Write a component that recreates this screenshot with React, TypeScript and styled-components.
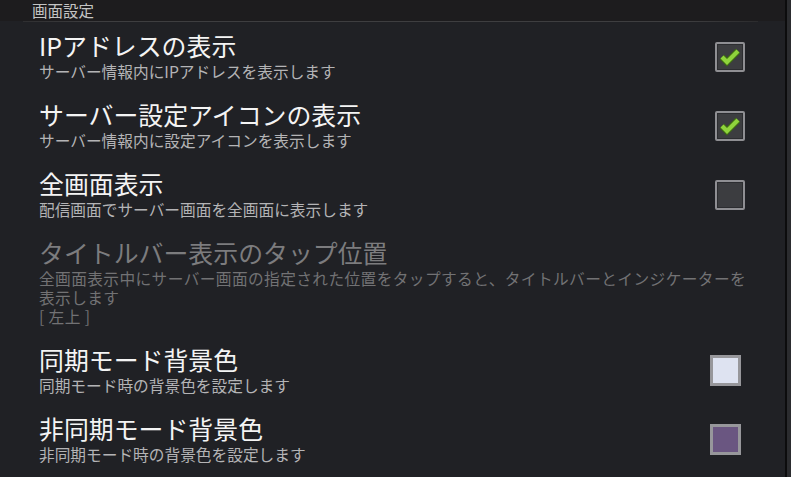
import React from "react";
import styled, { createGlobalStyle } from "styled-components";

const GlobalStyle = createGlobalStyle`
    html, body {
        margin: 0;
        padding: 0;
        background: #202125;
    }
    body {
        font-family: "Noto Sans CJK JP", "Noto Sans", sans-serif;
    }
`;

const Screen = styled.div`
    display: flex;
    width: 791px;
    height: 477px;
    overflow: hidden;
    background: #202125;
`;

const Main = styled.div`
    flex: 1;
    display: flex;
    flex-direction: column;
`;

const ScrollEdge = styled.div`
    width: 4px;
    border-left: 2px solid #0c0c0d;
    background: #2b2c2f;
`;

const Header = styled.div`
    height: 21px;
    background: #1d1c1e;
    padding-left: 32px;
    font-size: 15.5px;
    line-height: 21px;
    color: #c4c4c4;
`;

const HeaderLine = styled.div`
    height: 1px;
    margin: 0 27px 0 23px;
    background: linear-gradient(to right, #2f2f31, #3e3e40 10%, #3e3e40 90%, #2c2c2e);
`;

const Row = styled.div<{ $h: number }>`
    display: flex;
    align-items: center;
    min-height: ${p => p.$h}px;
    padding-left: 39px;
`;

const TextBlock = styled.div`
    flex: 1;
    display: flex;
    flex-direction: column;
    padding: 0 34px 2px 0;
`;

const Title = styled.div<{ $off?: boolean }>`
    font-size: 24.9px;
    line-height: 30px;
    margin-bottom: 2px;
    color: ${p => (p.$off ? "#7c7c7e" : "#f4f4f4")};
    white-space: nowrap;
`;

const Summary = styled.div<{ $off?: boolean }>`
    font-size: 15.7px;
    line-height: 19px;
    letter-spacing: ${p => (p.$off ? "0.4px" : "0")};
    color: ${p => (p.$off ? "#727274" : "#b4b4b6")};
`;

const Widget = styled.div`
    width: 60px;
    margin-right: 25px;
    display: flex;
    justify-content: center;
`;

const Box = styled.div`
    width: 26px;
    height: 26px;
    border: 2px solid #8f8f93;
    border-radius: 2px;
    background: #3c3d40;
    box-shadow: inset 0 0 0 1px #2c2d30;
    display: flex;
    align-items: center;
    justify-content: center;
`;

const Swatch = styled.div<{ $color: string }>`
    width: 25px;
    height: 25px;
    margin-right: 9px;
    border: 3px solid #97979b;
    background: ${p => p.$color};
`;

const Check = () => (
    <svg width="24" height="20" viewBox="0 0 24 20">
        <path d="M4 10 L9 15 L20 4" fill="none" stroke="#3e6b12" strokeWidth="6.5" />
        <path d="M4 10 L9 15 L20 4" fill="none" stroke="#8fd43c" strokeWidth="4.2" />
    </svg>
);

type Pref = {
    title: string;
    summary: string;
    extra?: string;
    off?: boolean;
    h: number;
    widget?: React.ReactNode;
};

const PREFS: Pref[] = [
    { title: "IPアドレスの表示", summary: "サーバー情報内にIPアドレスを表示します", h: 69, widget: <Box><Check /></Box> },
    { title: "サーバー設定アイコンの表示", summary: "サーバー情報内に設定アイコンを表示します", h: 69, widget: <Box><Check /></Box> },
    { title: "全画面表示", summary: "配信画面でサーバー画面を全画面に表示します", h: 69, widget: <Box /> },
    {
        title: "タイトルバー表示のタップ位置",
        summary: "全画面表示中にサーバー画面の指定された位置をタップすると、タイトルバーとインジケーターを表示します",
        extra: "[ 左上 ]",
        off: true,
        h: 107,
    },
    { title: "同期モード背景色", summary: "同期モード時の背景色を設定します", h: 69, widget: <Swatch $color="#dee3f1" /> },
    { title: "非同期モード背景色", summary: "非同期モード時の背景色を設定します", h: 68, widget: <Swatch $color="#6a5681" /> },
];

export default function App() {
    return (
        <>
            <GlobalStyle />
            <Screen>
                <Main>
                    <Header>画面設定</Header>
                    <HeaderLine />
                    {PREFS.map(p => (
                        <Row key={p.title} $h={p.h}>
                            <TextBlock>
                                <Title $off={p.off}>{p.title}</Title>
                                <Summary $off={p.off}>{p.summary}</Summary>
                                {p.extra ? <Summary $off={p.off}>{p.extra}</Summary> : null}
                            </TextBlock>
                            {p.widget ? <Widget>{p.widget}</Widget> : null}
                        </Row>
                    ))}
                </Main>
                <ScrollEdge />
            </Screen>
        </>
    );
}
